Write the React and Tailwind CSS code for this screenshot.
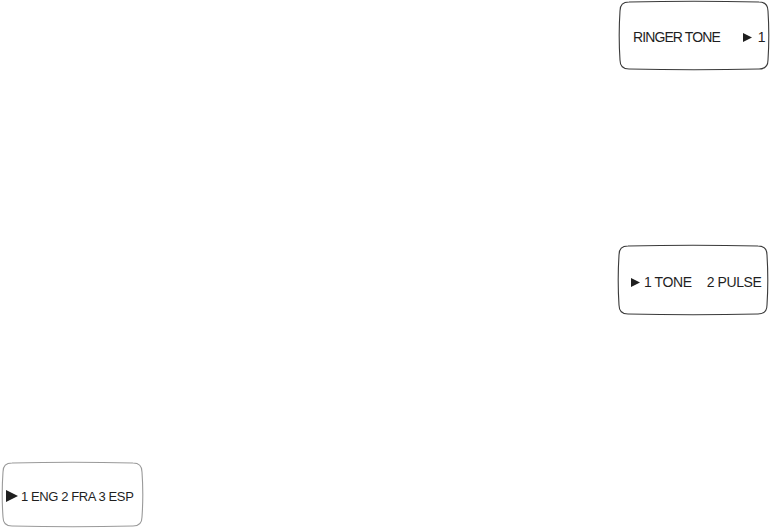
import React from 'react';

const Arrow = ({ w = 9, h = 9 }) => (
    <svg width={w} height={h} viewBox={`0 0 ${w} ${h}`} className="shrink-0">
        <path d={`M0 0 L${w} ${h / 2} L0 ${h} Z`} fill="#1f1f1f" />
    </svg>
);

// LCD outline: rounded box whose sides bulge out a little
const LcdFrame = ({ w, h, stroke = '#3a3a3a', className = '', children }) => {
    const i = 2, r = 11, b = 1.6;
    const d = `M ${r} ${i} Q ${w / 2} ${i - b} ${w - r} ${i} Q ${w - i} ${i} ${w - i} ${r} Q ${w - i + b} ${h / 2} ${w - i} ${h - r} Q ${w - i} ${h - i} ${w - r} ${h - i} Q ${w / 2} ${h - i + b} ${r} ${h - i} Q ${i} ${h - i} ${i} ${h - r} Q ${i - b} ${h / 2} ${i} ${r} Q ${i} ${i} ${r} ${i} Z`;
    return (
        <div className={`relative flex items-center shrink-0 ${className}`} style={{ width: w, height: h }}>
            <svg className="absolute inset-0" width={w} height={h}>
                <path d={d} fill="none" stroke={stroke} strokeWidth="1.1" />
            </svg>
            {children}
        </div>
    );
};

export default function App() {
    return (
        <div className="w-[774px] h-[530px] bg-white flex flex-col font-['Liberation_Sans',Arial,sans-serif] text-[#1f1f1f]">
            {/* Ringer tone */}
            <div className="flex justify-end pr-[4px]">
                <LcdFrame w={152} h={71} className="pl-[15px] pt-[3px]">
                    <span className="text-[14px] tracking-[-0.9px] leading-none">RINGER TONE</span>
                    <span className="ml-[23px]"><Arrow w={9} h={9} /></span>
                    <span className="ml-[6px] text-[14px] leading-none">1</span>
                </LcdFrame>
            </div>

            {/* Dial mode */}
            <div className="flex justify-end pr-[5px] mt-[173px]">
                <LcdFrame w={152} h={72} className="pl-[14px] pt-[4px]">
                    <Arrow w={9} h={9} />
                    <span className="ml-[4px] text-[14px] tracking-[-0.4px] leading-none whitespace-pre">1 TONE</span>
                    <span className="ml-[15px] text-[14px] tracking-[-0.4px] leading-none whitespace-pre">2 PULSE</span>
                </LcdFrame>
            </div>

            {/* Language */}
            <div className="flex pl-[1px] mt-[145px]">
                <LcdFrame w={143} h={67} stroke="#9a9a9a" className="pl-[5px] pt-[3px]">
                    <Arrow w={12} h={12} />
                    <span className="ml-[3px] text-[13px] tracking-[-0.4px] leading-none">1 ENG 2 FRA 3 ESP</span>
                </LcdFrame>
            </div>
        </div>
    );
}
